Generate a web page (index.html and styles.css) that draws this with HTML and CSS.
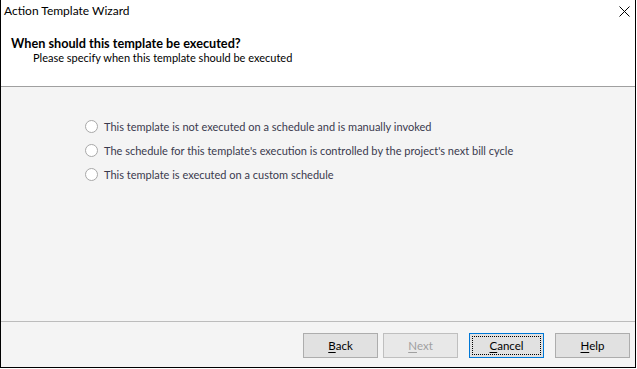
FILE: index.html
```html
<!DOCTYPE html>
<html>
<head>
<meta charset="utf-8">
<link rel="stylesheet" href="styles.css">
</head>
<body>
<div class="window">
  <div class="titlebar">
    <span class="title">Action Template Wizard</span>
    <svg class="close" width="11" height="11" viewBox="0 0 11 11"><path d="M0.5 0.5 L10.5 10.5 M10.5 0.5 L0.5 10.5" stroke="#000" stroke-width="1" fill="none"/></svg>
  </div>
  <div class="header">
    <div class="heading">When should this template be executed?</div>
    <div class="subheading">Please specify when this template should be executed</div>
  </div>
  <div class="content">
    <label class="option"><span class="radio"></span><span>This template is not executed on a schedule and is manually invoked</span></label>
    <label class="option"><span class="radio"></span><span>The schedule for this template's execution is controlled by the project's next bill cycle</span></label>
    <label class="option"><span class="radio"></span><span>This template is executed on a custom schedule</span></label>
  </div>
  <div class="footer">
    <button class="btn back"><u>B</u>ack</button>
    <button class="btn disabled"><u>N</u>ext</button>
    <button class="btn default"><span class="focus"><u>C</u>ancel</span></button>
    <button class="btn"><u>H</u>elp</button>
  </div>
</div>
</body>
</html>
```
FILE: styles.css
```css
* {
  box-sizing: border-box;
}
html, body {
  margin: 0;
  padding: 0;
  background: #fff;
}
body {
  font-family: Lato, "Noto Sans", "DejaVu Sans", sans-serif;
  font-size: 11px;
  color: #000;
}
.window {
  width: 636px;
  height: 368px;
  border-left: 1px solid #000;
  border-right: 1px solid #000;
  border-bottom: 1px solid #000;
  display: flex;
  flex-direction: column;
  background: #fff;
}
.titlebar {
  height: 30px;
  flex: none;
  display: flex;
  align-items: flex-start;
  justify-content: space-between;
  padding: 3px 5px 0 3px;
}
.title {
  font-size: 12px;
  line-height: 16px;
  color: #000;
}
.close {
  margin-top: 3px;
}
.header {
  height: 57px;
  flex: none;
  border-bottom: 1px solid #a0a0a0;
  padding-left: 10px;
}
.heading {
  font-weight: bold;
  font-size: 12.7px;
  line-height: 16px;
  margin-top: 5px;
}
.subheading {
  padding-left: 22px;
  line-height: 16px;
  font-size: 11px;
  margin-top: -1px;
}
.content {
  flex: 1;
  background: #f4f4f4;
  border-bottom: 1px solid #bcbcbc;
  display: flex;
  flex-direction: column;
  padding: 31px 0 0 84px;
  gap: 8px;
}
.option {
  display: flex;
  align-items: center;
  gap: 6px;
  height: 16px;
  color: #3a3a4e;
  font-size: 11px;
}
.radio {
  flex: none;
  width: 13px;
  height: 13px;
  border: 1px solid #a8a8a8;
  border-radius: 50%;
  background: #fff;
}
.footer {
  height: 45px;
  flex: none;
  background: #f4f4f4;
  display: flex;
  justify-content: flex-end;
  align-items: flex-start;
  padding: 11px 5px 0 0;
  gap: 11px;
}
.btn {
  width: 75px;
  height: 25px;
  border: 1px solid #adadad;
  background: #e1e1e1;
  font-family: inherit;
  font-size: 11.5px;
  color: #000;
  padding: 0;
  margin: 0;
  display: flex;
  align-items: center;
  justify-content: center;
}
.btn.back {
  margin-right: -6px;
}
.btn.disabled {
  border-color: #bfbfbf;
  background: #e8e8e8;
  color: #a0a0a0;
}
.btn.default {
  border: 1px solid #0078d7;
  padding: 2px;
}
.focus {
  flex: 1;
  align-self: stretch;
  border: 1px dotted #000;
  display: flex;
  align-items: center;
  justify-content: center;
}
u {
  text-decoration-thickness: 1px;
  text-underline-offset: 2px;
}
```
